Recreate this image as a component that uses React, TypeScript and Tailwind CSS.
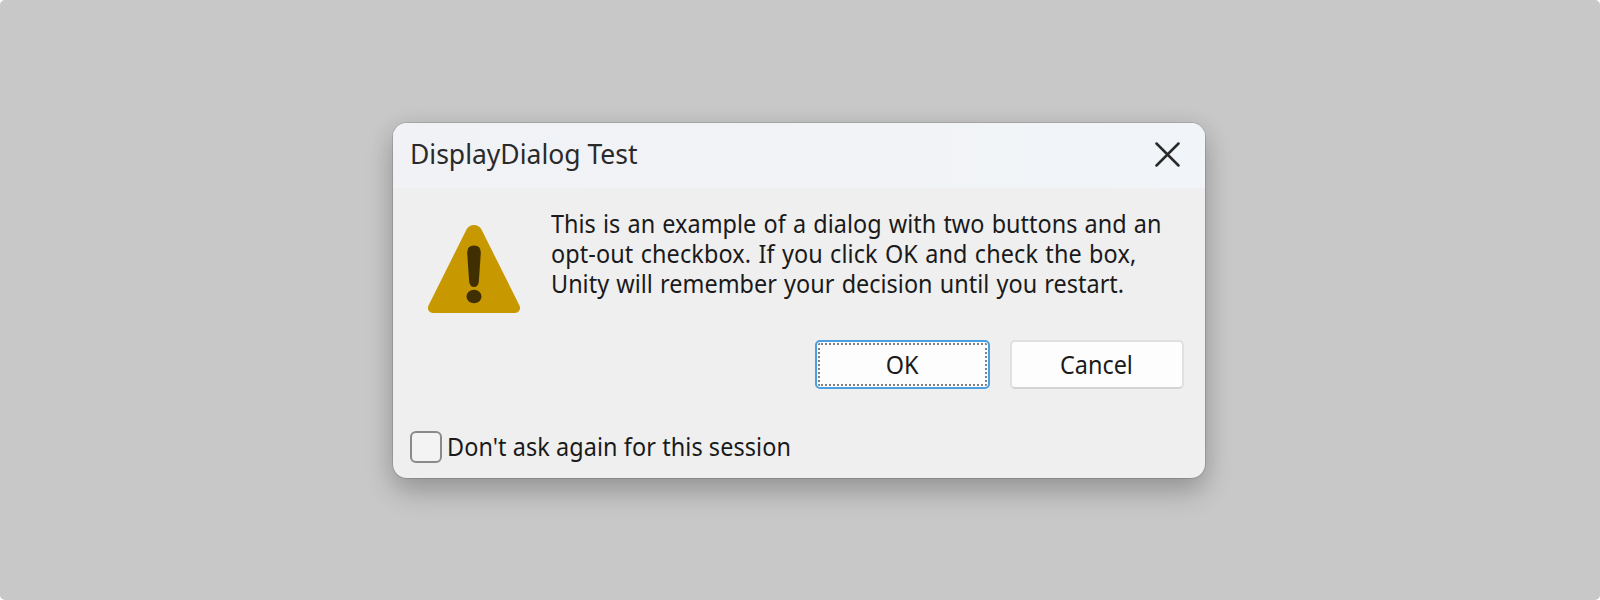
import type { ReactNode } from 'react';

const messageLines = [
  { text: 'This is an example of a dialog with two buttons and an', spacing: 'tracking-[0.03px] [word-spacing:1.2px]' },
  { text: 'opt-out checkbox. If you click OK and check the box,', spacing: 'tracking-[0.13px] [word-spacing:1.2px]' },
  { text: 'Unity will remember your decision until you restart.', spacing: 'tracking-[0.03px] [word-spacing:1.2px]' },
];

export default function App() {
  return (
    <div className="h-[600px] w-[1600px] overflow-hidden bg-white">
      <main className="flex h-full w-full items-start justify-center rounded-[5px] bg-[#c8c8c8] pt-[123px] pr-[2px] font-['Noto_Sans','Liberation_Sans',sans-serif] text-[#1a1a1a]">
        <Dialog />
      </main>
    </div>
  );
}

function Dialog() {
  return (
    <section
      role="dialog"
      aria-label="DisplayDialog Test"
      className="flex h-[355px] w-[812px] flex-col overflow-hidden rounded-[14px] bg-[#efefef] shadow-[0_0_0_1px_rgba(0,0,0,0.12),0_14px_28px_rgba(0,0,0,0.22),0_2px_24px_rgba(0,0,0,0.08)]"
    >
      <header className="flex h-[65px] shrink-0 items-center justify-between bg-gradient-to-r from-[#f1f2f5] to-[#f1f4f8] pr-[25px] pl-[17px]">
        <h1 className="mt-[-5px] origin-left scale-x-[0.946] text-[28px] leading-[36px] whitespace-nowrap text-[#2a2a2a]">
          DisplayDialog Test
        </h1>
        <button type="button" aria-label="Close" className="mt-[-3px]">
          <CloseIcon />
        </button>
      </header>

      <div className="flex pt-[20px] pl-[34px]">
        <div className="mt-[17px] w-[94px] shrink-0">
          <WarningIcon />
        </div>
        <div className="ml-[30px] text-[26px] leading-[30px] whitespace-nowrap">
          {messageLines.map((line) => (
            <p key={line.text} className={`origin-left scale-x-90 ${line.spacing}`}>
              {line.text}
            </p>
          ))}
        </div>
      </div>

      <div className="mt-[26px] flex justify-end gap-[20px] pr-[21px]">
        <DialogButton focused>
          <span className="mt-[-1px] scale-x-90">OK</span>
        </DialogButton>
        <DialogButton>
          <span className="mt-[-1px] mr-[2px] scale-x-[0.9]">Cancel</span>
        </DialogButton>
      </div>

      <label className="mt-[42px] flex items-center pl-[17px]">
        <span className="h-[32px] w-[32px] rounded-[6px] border-2 border-[#8a8a8a] bg-[#f3f3f3]" />
        <span className="mt-[-2px] ml-[5px] origin-left scale-x-90 text-[26px] leading-[32px] tracking-[0.1px] whitespace-nowrap">
          Don't ask again for this session
        </span>
      </label>
    </section>
  );
}

function DialogButton({ focused = false, children }: { focused?: boolean; children: ReactNode }) {
  return (
    <button
      type="button"
      className={
        focused
          ? 'h-[49px] w-[175px] rounded-[5px] border-2 border-[#4a9fe0] bg-[#fdfdfd] p-[1px]'
          : 'h-[49px] w-[174px] rounded-[5px] border-2 border-[#e0e0e0] border-b-[#d3d3d3] bg-[#fdfdfd] p-[1px]'
      }
    >
      <span
        className={
          focused
            ? 'flex h-full items-center justify-center rounded-[2px] border-2 border-dotted border-[#808080] text-[26px] leading-[30px]'
            : 'flex h-full items-center justify-center text-[26px] leading-[30px]'
        }
      >
        {children}
      </span>
    </button>
  );
}

function CloseIcon() {
  return (
    <svg width="25" height="25" viewBox="0 0 25 25" fill="none" stroke="#2a2a2a" strokeWidth="2.5" strokeLinecap="round" aria-hidden>
      <path d="M1.500 1.500 L23.500 23.500 M23.500 1.500 L1.500 23.500" />
    </svg>
  );
}

function WarningIcon() {
  return (
    <svg width="94" height="89" viewBox="0 0 94 89" aria-hidden>
      <path
        d="M39.500 4.500 Q42 0 47 0 Q52 0 54.500 4.500 L92.200 80 Q94 83.500 92 86 Q90.500 88 88 88 H6 Q3.500 88 1.800 86 Q0.300 83.500 1.500 80.500 Z"
        fill="#c79800"
      />
      <path d="M47 20.500 Q54 20.500 53.800 28 L51.800 57 Q51 62 47 62 Q43 62 42.200 57 L40.200 28 Q40 20.500 47 20.500 Z" fill="#402f00" />
      <ellipse cx="47" cy="71.500" rx="7.500" ry="6.800" fill="#402f00" />
    </svg>
  );
}
